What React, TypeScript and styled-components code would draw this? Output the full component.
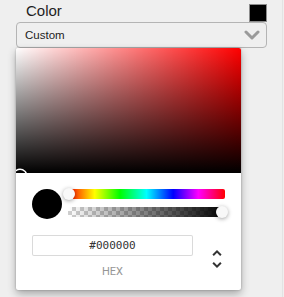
import React from 'react';
import styled, { createGlobalStyle } from 'styled-components';

const GlobalStyle = createGlobalStyle`
  html, body {
    margin: 0;
    padding: 0;
    background: #efefef;
  }
  * {
    box-sizing: border-box;
  }
`;

const Page = styled.div`
  width: 283px;
  height: 297px;
  padding-left: 16px;
  border-right: 1px solid #e3e3e3;
  font-family: 'Liberation Sans', Arial, sans-serif;
`;

const Field = styled.div`
  width: 251px;
`;

const TopRow = styled.div`
  display: flex;
  justify-content: space-between;
  align-items: flex-start;
  height: 22px;
`;

const Label = styled.span`
  padding-left: 10px;
  font-size: 15px;
  line-height: 22px;
  color: #1e1e1e;
`;

const ColorBox = styled.div<{ $color: string }>`
  width: 18px;
  height: 18px;
  margin-top: 4px;
  background: ${(p) => p.$color};
  border: 1px solid #8c8c8c;
`;

const Select = styled.div`
  display: flex;
  align-items: center;
  justify-content: space-between;
  height: 26px;
  padding: 0 6px 0 8px;
  border: 1px solid #b4b4b4;
  border-radius: 4px;
  font-size: 11.5px;
  color: #222;
`;

const Picker = styled.div`
  width: 225px;
  background: #fff;
  border-radius: 2px;
  box-shadow: 0 0 2px rgba(0, 0, 0, 0.3), 0 4px 8px rgba(0, 0, 0, 0.3);
`;

const Saturation = styled.div<{ $hue: string }>`
  position: relative;
  height: 125px;
  overflow: hidden;
  border-radius: 2px 2px 0 0;
  background:
    linear-gradient(to top, #000, rgba(0, 0, 0, 0)),
    linear-gradient(to right, #fff, rgba(255, 255, 255, 0)),
    ${(p) => p.$hue};
`;

const SatPointer = styled.div`
  position: absolute;
  left: -2px;
  top: 122px;
  width: 12px;
  height: 12px;
  border-radius: 50%;
  box-shadow: 0 0 0 1.5px #fff, inset 0 0 1px 1px rgba(0, 0, 0, 0.3);
`;

const Body = styled.div`
  padding: 16px 16px 12px;
`;

const Controls = styled.div`
  display: flex;
`;

const Swatch = styled.div<{ $color: string }>`
  width: 30px;
  height: 30px;
  border-radius: 50%;
  background: ${(p) => p.$color};
  flex-shrink: 0;
`;

const Sliders = styled.div`
  flex: 1;
  margin-left: 6px;
  display: flex;
  flex-direction: column;
  gap: 8px;
`;

const Track = styled.div`
  position: relative;
  height: 10px;
  border-radius: 2px;
`;

const HueTrack = styled(Track)`
  background: linear-gradient(
    to right,
    #f00 0%,
    #ff0 17%,
    #0f0 33%,
    #0ff 50%,
    #00f 67%,
    #f0f 83%,
    #f00 100%
  );
`;

const AlphaTrack = styled(Track)`
  background:
    linear-gradient(to right, rgba(0, 0, 0, 0), #000),
    repeating-conic-gradient(#cfcfcf 0% 25%, #fff 0% 50%) 0 0 / 8px 8px;
`;

const Knob = styled.div<{ $left: string }>`
  position: absolute;
  top: -1px;
  left: ${(p) => p.$left};
  width: 12px;
  height: 12px;
  margin-left: -6px;
  border-radius: 50%;
  background: #f8f8f8;
  box-shadow: 0 1px 4px rgba(0, 0, 0, 0.37);
`;

const Fields = styled.div`
  display: flex;
  padding-top: 16px;
`;

const FieldWrap = styled.div`
  flex: 1;
  display: flex;
  flex-direction: column;
`;

const HexInput = styled.input`
  width: 100%;
  height: 21px;
  border: none;
  border-radius: 2px;
  box-shadow: inset 0 0 0 1px #dadada;
  font-family: 'DejaVu Sans Mono', monospace;
  font-size: 11px;
  color: #333;
  text-align: center;
  outline: none;
  padding: 0;
`;

const FieldLabel = styled.div`
  margin-top: 10px;
  font-family: Roboto, 'Liberation Sans', sans-serif;
  font-size: 11px;
  line-height: 12px;
  color: #969696;
  text-align: center;
  text-transform: uppercase;
`;

const Toggle = styled.div`
  width: 32px;
  text-align: right;
  svg {
    margin-top: 12px;
    margin-right: -4px;
  }
`;

const Chevron = () => (
  <svg width="16" height="10" viewBox="0 0 16 10">
    <polyline
      points="2,2 8,8 14,2"
      fill="none"
      stroke="#9a9a9a"
      strokeWidth="3"
      strokeLinecap="round"
      strokeLinejoin="round"
    />
  </svg>
);

const ToggleIcon = () => (
  <svg width="24" height="24" viewBox="0 0 24 24">
    <path
      fill="#333"
      d="M12,5.83L15.17,9L16.58,7.59L12,3L7.41,7.59L8.83,9L12,5.83Z"
    />
    <path
      fill="#333"
      d="M12,18.17L8.83,15L7.42,16.41L12,21L16.59,16.41L15.17,15L12,18.17Z"
    />
  </svg>
);

const App: React.FC = () => {
  const color = '#000000';
  return (
    <>
      <GlobalStyle />
      <Page>
        <Field>
          <TopRow>
            <Label>Color</Label>
            <ColorBox $color={color} />
          </TopRow>
          <Select>
            <span>Custom</span>
            <Chevron />
          </Select>
        </Field>
        <Picker>
          <Saturation $hue="#f00">
            <SatPointer />
          </Saturation>
          <Body>
            <Controls>
              <Swatch $color={color} />
              <Sliders>
                <HueTrack>
                  <Knob $left="1px" />
                </HueTrack>
                <AlphaTrack>
                  <Knob $left="calc(100% - 3px)" />
                </AlphaTrack>
              </Sliders>
            </Controls>
            <Fields>
              <FieldWrap>
                <HexInput defaultValue={color} />
                <FieldLabel>hex</FieldLabel>
              </FieldWrap>
              <Toggle>
                <ToggleIcon />
              </Toggle>
            </Fields>
          </Body>
        </Picker>
      </Page>
    </>
  );
};

export default App;
